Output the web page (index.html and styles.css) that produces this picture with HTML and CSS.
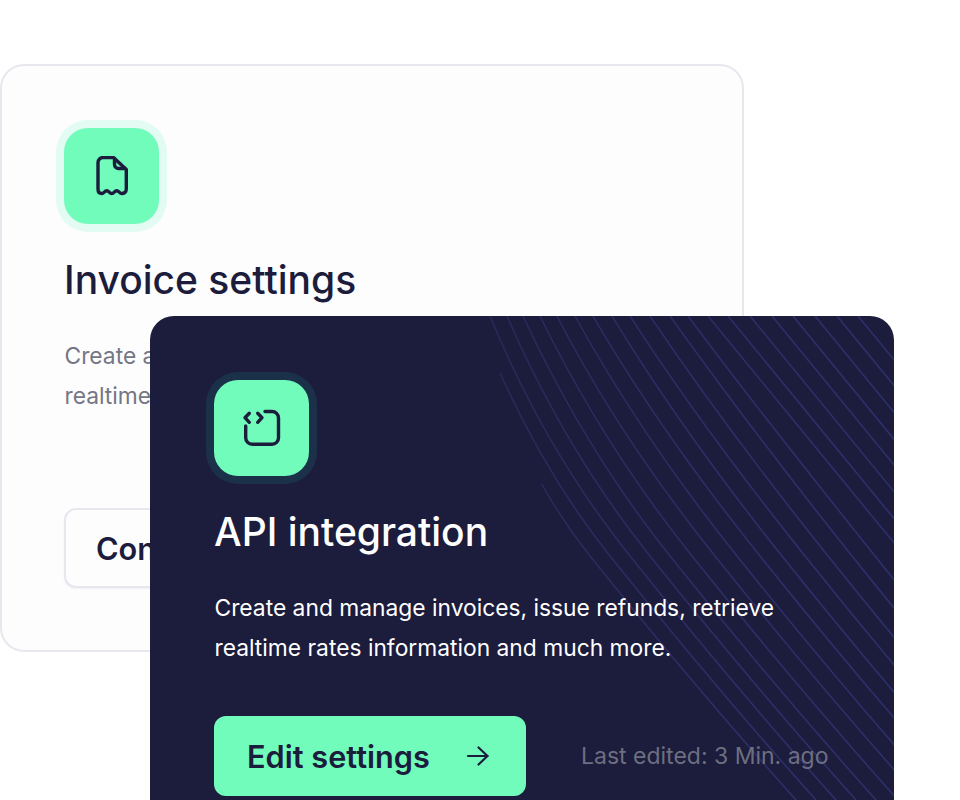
FILE: index.html
```html
<!DOCTYPE html>
<html lang="en">
<head>
<meta charset="utf-8">
<title>Settings cards</title>
<link rel="stylesheet" href="styles.css">
</head>
<body>
<main class="stage">
  <section class="card card-light">
    <div class="tile">
      <svg class="tile-icon" viewBox="0 0 40 40" fill="none" stroke="#1c1c3c" stroke-width="3.4" stroke-linecap="round" stroke-linejoin="round">
        <path d="M11 1.5H21.5L34.3 13.5V33C34.3 36 32.2 37.5 29.7 37.5C27.5 37.5 27 34.7 24.7 34.7C22.5 34.7 22 37.5 19.7 37.5C17.5 37.5 17 34.7 14.7 34.7C12.5 34.7 12 37.5 9.7 37.5C7.5 37.5 6 36 6 33V6.5A5 5 0 0 1 11 1.5Z"/>
        <path d="M22.5 3V8.5A4 4 0 0 0 26.5 12.5H33"/>
      </svg>
    </div>
    <h2 class="title">Invoice settings</h2>
    <p class="text text-light">Create and manage invoices, issue refunds, retrieve realtime rates information and much more.</p>
    <a class="btn btn-outline">Configure</a>
  </section>

  <section class="card card-dark">
    <svg class="waves" viewBox="150 316 744 588" fill="none" aria-hidden="true">
      <defs>
        <linearGradient id="wave-fade" gradientUnits="userSpaceOnUse" x1="490" y1="0" x2="800" y2="0">
          <stop offset="0" stop-color="#292959"/>
          <stop offset="1" stop-color="#2f2f6e"/>
        </linearGradient>
      </defs>
      <g stroke="url(#wave-fade)" class="wave-lines">
        <path d="M541.7 484Q562.8 521.8 590 556q103 129 206 244"/>
        <path d="M500 373Q547.9 478.4 610 556q103 129 206 244"/>
        <path d="M490 316Q545.1 449.9 630 556q103 129 206 244"/>
        <path d="M507 316Q565.3 450.1 650 556q103 129 206 244"/>
        <path d="M523 316Q585.5 450.4 670 556q103 129 206 244"/>
        <path d="M540 316Q602.5 444.1 692 556q103 129 206 244"/>
        <path d="M557 316Q617.7 434.4 715 556q103 129 206 244"/>
        <path d="M575 316Q640.8 435.8 737 556q103 129 206 244"/>
        <path d="M593 316Q659.5 430.4 760 556q103 129 206 244"/>
        <path d="M612 316Q682.5 431.6 782 556q103 129 206 244"/>
        <path d="M630 316Q700.8 425.7 805 556q103 129 206 244"/>
        <path d="M650 316Q726 428.5 828 556q103 129 206 244"/>
        <path d="M670 316Q753 432 852 556q103 129 206 244"/>
        <path d="M688 316Q750 399.7 875 556q103 129 206 244"/>
        <path d="M708 316l200 244"/>
        <path d="M728 316l200 244"/>
        <path d="M750 316l200 244"/>
        <path d="M772 316l200 244"/>
        <path d="M793 316l200 244"/>
        <path d="M815 316l200 244"/>
        <path d="M837 316l200 244"/>
        <path d="M858 316l200 244"/>
      </g>
    </svg>
    <div class="tile tile-on-dark">
      <svg class="tile-icon" viewBox="0 0 40 40" fill="none" stroke="#1c1c3c" stroke-width="3.4" stroke-linecap="round" stroke-linejoin="round">
        <path d="M23 3.5H30A6.5 6.5 0 0 1 36.5 10V29.8A6.5 6.5 0 0 1 30 36.3H10.2A6.5 6.5 0 0 1 3.7 29.8V18"/>
        <path d="M7.3 5.3L3 9.7L7.3 14.3"/>
        <path d="M15.7 5.3L20 9.7L15.7 14.3"/>
      </svg>
    </div>
    <h2 class="title title-dark">API integration</h2>
    <p class="text text-dark">Create and manage invoices, issue refunds, retrieve realtime rates information and much more.</p>
    <div class="actions">
      <a class="btn btn-primary">Edit settings
        <svg class="arrow" viewBox="0 0 24 24" fill="none" stroke="#1c1c3c" stroke-width="2.2" stroke-linecap="round" stroke-linejoin="round">
          <path d="M2 12H21.5"/>
          <path d="M12.5 3.5L21.5 12L12.5 20.5"/>
        </svg>
      </a>
      <span class="meta">Last edited: 3 Min. ago</span>
    </div>
  </section>
</main>
</body>
</html>
```

FILE: styles.css
```css
* {
  box-sizing: border-box;
}

html,
body {
  margin: 0;
  height: 100%;
  overflow: hidden;
  background: #fff;
}

body {
  font-family: Inter, "Liberation Sans", sans-serif;
}

.stage {
  padding-top: 64px;
}

.card {
  width: 744px;
  height: 588px;
  border-radius: 24px;
  padding: 64px;
}

.card-light {
  background: #fdfdfe;
  border: 2px solid #e7e8ee;
  padding: 62px;
}

.card-dark {
  position: relative;
  margin: -336px 0 0 150px;
  background: #1c1c3c;
  overflow: hidden;
}

.waves {
  position: absolute;
  top: 0;
  left: 0;
  width: 744px;
  height: 588px;
}

.wave-lines {
  stroke-width: 1.5;
}

.tile {
  position: relative;
  display: flex;
  align-items: center;
  justify-content: center;
  width: 95px;
  height: 96px;
  border-radius: 24px;
  background: #71fcbc;
  box-shadow: 0 0 0 8px #e2fbf3;
}

.tile-on-dark {
  box-shadow: 0 0 0 8px #1b3049;
}

.tile-icon {
  width: 40px;
  height: 40px;
}

.title {
  position: relative;
  margin: 32px 0 0;
  font-size: 39px;
  line-height: 48px;
  font-weight: 500;
  color: #1c1c3c;
}

.title-dark {
  color: #fff;
}

.text {
  position: relative;
  margin: 32px 0 0;
  padding-left: 0.5px;
  font-size: 22.8px;
  line-height: 40px;
  width: 600px;
}

.text-light {
  height: 120px;
  color: #747684;
}

.text-dark {
  color: #fff;
}

.btn {
  display: inline-flex;
  align-items: center;
  height: 80px;
  border-radius: 12px;
  font-size: 30.7px;
  font-weight: 600;
  color: #1c1c3c;
}

.btn-outline {
  margin-top: 52px;
  padding: 0 30px;
  border: 2px solid #e7e8ee;
  background: #fdfdfe;
  box-shadow: 0 1px 2px rgba(28, 28, 60, 0.06);
}

.btn-primary {
  width: 312px;
  padding: 0 36px 0 33px;
  justify-content: space-between;
  background: #71fcbc;
}

.arrow {
  width: 24px;
  height: 24px;
}

.actions {
  position: relative;
  display: flex;
  align-items: center;
  gap: 55px;
  margin-top: 48px;
}

.meta {
  font-size: 23px;
  color: #6d6f80;
}
```
